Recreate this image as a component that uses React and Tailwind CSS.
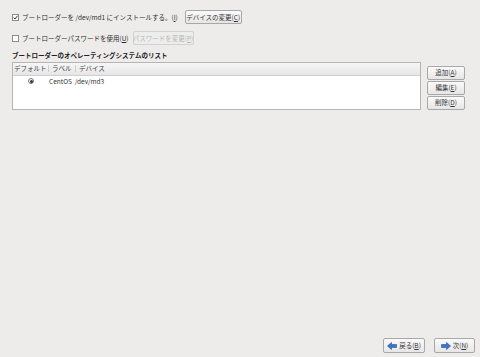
const font = { fontFamily: '"Noto Sans CJK JP", "DejaVu Sans", sans-serif' };

function Mn({ children }) {
  return <span className="underline underline-offset-1">{children}</span>;
}

function Check({ checked }) {
  return (
    <span className="flex h-[7px] w-[7px] shrink-0 items-center justify-center border border-[#8a8a8a] bg-white">
      {checked && (
        <svg width="5" height="5" viewBox="0 0 5 5">
          <path d="M0.6 2.6 L2 4 L4.4 0.8" fill="none" stroke="#333" strokeWidth="1" />
        </svg>
      )}
    </span>
  );
}

function Btn({ children, className = "", disabled }) {
  return (
    <div
      className={`flex shrink-0 items-center justify-center whitespace-nowrap rounded-[2px] border ${
        disabled
          ? "border-[#d2d2d2] bg-[#ededed] text-[#b8b8b8]"
          : "border-[#a8a8a8] bg-gradient-to-b from-[#fafafa] to-[#e6e6e6] text-[#333]"
      } ${className}`}
    >
      {children}
    </div>
  );
}

function Arrow({ dir }) {
  return (
    <svg width="10" height="8" viewBox="0 0 10 8">
      {dir === "left" ? (
        <path d="M0.5 4 L4.5 0.5 L4.5 2.5 L9.5 2.5 L9.5 5.5 L4.5 5.5 L4.5 7.5 Z" fill="#3a74c4" stroke="#24569e" strokeWidth="0.6" />
      ) : (
        <path d="M9.5 4 L5.5 0.5 L5.5 2.5 L0.5 2.5 L0.5 5.5 L5.5 5.5 L5.5 7.5 Z" fill="#3a74c4" stroke="#24569e" strokeWidth="0.6" />
      )}
    </svg>
  );
}

export default function App() {
  return (
    <div
      className="flex h-[357px] w-[480px] flex-col whitespace-nowrap bg-[#edeceb] text-[6.5px] leading-none text-[#2e2e2e]"
      style={font}
    >
      <div className="flex flex-col pl-[12px] pt-[10px]">
        {/* Install option */}
        <div className="flex h-[14px] items-center">
          <Check checked />
          <span className="ml-[3px]">
            ブートローダーを /dev/md1 にインストールする。(<Mn>I</Mn>)
          </span>
          <Btn className="ml-[7px] h-[14px] w-[57px] border-[#7f9dc6]">
            デバイスの変更(<Mn>C</Mn>)
          </Btn>
        </div>

        {/* Password */}
        <div className="mt-[7px] flex h-[14px] items-center">
          <Check />
          <span className="ml-[3px]">
            ブートローダーパスワードを使用(<Mn>U</Mn>)
          </span>
          <Btn disabled className="ml-[4px] h-[14px] w-[61px]">
            パスワードを変更(<Mn>P</Mn>)
          </Btn>
        </div>

        <div className="mt-[7px] font-bold text-[#222]">
          ブートローダーのオペレーティングシステムのリスト
        </div>

        {/* List + side buttons */}
        <div className="mt-[3px] flex">
          <div className="h-[48px] w-[409px] border border-[#b5b5b5] bg-white">
            <div className="flex h-[13px] items-center border-b border-[#cfcfcf] bg-gradient-to-b from-[#f6f6f6] to-[#e6e6e6] text-[#444]">
              <span className="w-[36px] border-r border-[#cfcfcf] pl-[1px]">デフォルト</span>
              <span className="w-[27px] border-r border-[#cfcfcf] pl-[3px]">ラベル</span>
              <span className="pl-[3px]">デバイス</span>
            </div>
            <div className="flex h-[11px] items-center">
              <span className="ml-[15px] flex h-[6px] w-[6px] items-center justify-center rounded-full border border-[#777] bg-white">
                <span className="h-[3px] w-[3px] rounded-full bg-[#333]" />
              </span>
              <span className="ml-[15px] text-[#333]">CentOS&nbsp; /dev/md3</span>
            </div>
          </div>
          <div className="ml-[6px] mt-[4px] flex flex-col gap-[1px]">
            <Btn className="h-[14px] w-[38px]">
              追加(<Mn>A</Mn>)
            </Btn>
            <Btn className="h-[14px] w-[38px]">
              編集(<Mn>E</Mn>)
            </Btn>
            <Btn className="h-[14px] w-[38px]">
              削除(<Mn>D</Mn>)
            </Btn>
          </div>
        </div>
      </div>

      <div className="flex-1" />

      {/* Navigation */}
      <div className="flex justify-end gap-[9px] pb-[4px] pr-[5px]">
        <Btn className="h-[15px] w-[42px] gap-[2px]">
          <Arrow dir="left" />
          <span>
            戻る(<Mn>B</Mn>)
          </span>
        </Btn>
        <Btn className="h-[15px] w-[41px] gap-[2px] border-[#6f94c8]">
          <Arrow dir="right" />
          <span>
            次(<Mn>N</Mn>)
          </span>
        </Btn>
      </div>
    </div>
  );
}
